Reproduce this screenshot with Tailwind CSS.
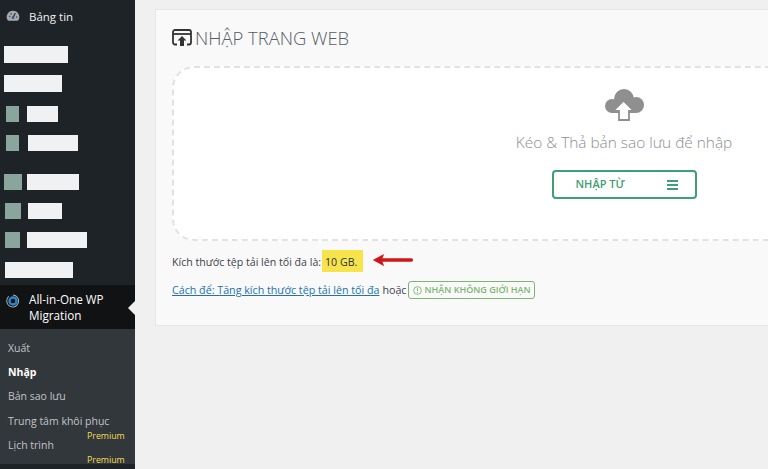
<!DOCTYPE html>
<html lang="vi">
<head>
    <meta charset="UTF-8">
    <title>All-in-One WP Migration</title>
    <script src="https://cdn.jsdelivr.net/npm/@tailwindcss/browser@4"></script>
</head>
<body class="w-[768px] h-[469px] overflow-hidden flex bg-[#f0f0f1] font-['Open_Sans','Noto_Sans',sans-serif] text-[#3c434a]">

    <!-- sidebar -->
    <aside class="w-[135px] h-[469px] shrink-0 bg-[#1d2327] flex flex-col overflow-hidden">
        <div class="h-[34px] pl-[6px] flex items-center gap-[9px] text-[11.5px] text-[#f0f0f1]">
            <svg class="w-[14px] h-[14px]" viewBox="0 0 20 20"><path fill="#a7aaad" d="M10 1a9 9 0 0 0-7.600 13.800c.3.500.8.700 1.300.7h12.600c.5 0 1-.2 1.300-.7A9 9 0 0 0 10 1z"/><path stroke="#1d2327" stroke-width="1.600" stroke-linecap="round" d="M10 11L13 5M5 9h.5M7 5.500h.5M15 10h.5"/><circle cx="10" cy="11" r="2" fill="#3858a0"/></svg>
            <span>Bảng tin</span>
        </div>
        <div class="mt-[12px] ml-[4px] w-[64px] h-[17px] bg-[#f0f1f3]"></div>
        <div class="mt-[12px] ml-[4px] w-[58px] h-[17px] bg-[#f0f1f3]"></div>

        <div class="mt-[14px] ml-[6px] flex h-[16px]"><div class="w-[13px] bg-[#8aa59c]"></div><div class="ml-[8px] w-[31px] bg-[#f0f1f3]"></div></div>
        <div class="mt-[13px] ml-[6px] flex h-[16px]"><div class="w-[13px] bg-[#8aa59c]"></div><div class="ml-[9px] w-[50px] bg-[#f0f1f3]"></div></div>
        <div class="mt-[23px] ml-[4px] flex h-[16px]"><div class="w-[18px] bg-[#8aa59c]"></div><div class="ml-[5px] w-[52px] bg-[#f0f1f3]"></div></div>
        <div class="mt-[13px] ml-[5px] flex h-[16px]"><div class="w-[16px] bg-[#8aa59c]"></div><div class="ml-[7px] w-[34px] bg-[#f0f1f3]"></div></div>
        <div class="mt-[13px] ml-[5px] flex h-[16px]"><div class="w-[15px] bg-[#8aa59c]"></div><div class="ml-[7px] w-[60px] bg-[#f0f1f3]"></div></div>
        <div class="mt-[14px] ml-[5px] w-[68px] h-[16px] bg-[#f0f1f3]"></div>

        <!-- active plugin item -->
        <div class="relative mt-[7px] h-[44px] bg-[#101214] flex items-center pl-[6px] gap-[9px] text-[11.7px] leading-[16px] text-white">
            <svg class="w-[14px] h-[14px] shrink-0 -mt-[13px]" viewBox="0 0 20 20" fill="none"><path stroke="#9fb3bd" stroke-width="1.500" d="M4 3.500A8.500 8.500 0 1 0 10 1.500"/><circle cx="10" cy="10" r="5" stroke="#2a86c8" stroke-width="3.500"/></svg>
            <span>All-in-One WP<br>Migration</span>
            <div class="absolute right-0 top-[16px] w-0 h-0 border-y-[7px] border-y-transparent border-r-[7px] border-r-[#f0f0f1]"></div>
        </div>

        <!-- submenu -->
        <div class="relative h-[135px] bg-[#32373c] pt-[7px] pl-[8px] flex flex-col text-[10.5px] leading-[24.200px] text-[#c3c4c7]">
            <span>Xuất</span>
            <span class="font-bold text-white">Nhập</span>
            <span>Bản sao lưu</span>
            <span class="whitespace-nowrap">Trung tâm khôi phục</span>
            <span>Lịch trình</span>
            <span class="absolute left-[87px] top-[100px] text-[8.800px] leading-[14px] text-[#f2dc50]">Premium</span>
            <span class="absolute left-[87px] top-[124px] text-[8.800px] leading-[14px] text-[#f2dc50]">Premium</span>
        </div>
    </aside>

    <!-- main -->
    <main class="pl-[20px] pt-[9px]">
        <section class="w-[640px] h-[317px] overflow-hidden bg-[#f9f9f9] border border-[#e6e6e6] pl-[16px] pt-[14px]">
            <h1 class="h-[28px] flex items-center gap-[3px] text-[18.400px] font-light text-[#555d66] whitespace-nowrap">
                <svg class="w-[20px] h-[18px]" viewBox="0 0 20 18" fill="none"><path stroke="#333" stroke-width="1.800" d="M5 15.500H3a2 2 0 0 1-2-2V3a2 2 0 0 1 2-2h14a2 2 0 0 1 2 2v10.500a2 2 0 0 1-2 2h-2"/><path stroke="#333" stroke-width="1.800" d="M1 5h18"/><path fill="#333" d="M10 7l4.500 4.500H12V17H8v-5.500H5.500z"/></svg>
                <span>NHẬP TRANG WEB</span>
            </h1>
            <div class="mt-[14px] w-[904px] h-[175px] bg-white border-2 border-dashed border-[#e2e2e2] rounded-[22px] flex flex-col items-center pt-[21px]">
                <svg class="w-[40px] h-[32px]" viewBox="0 0 40 32"><g fill="#8f8f8f"><circle cx="8" cy="17" r="7"/><circle cx="20" cy="10" r="10"/><circle cx="32" cy="16" r="8"/><rect x="8" y="14" width="24" height="10"/></g><path fill="#fff" stroke="#8f8f8f" stroke-width="1.800" d="M19.500 11.500L30 22h-5v9H15v-9H9z"/></svg>
                <p class="mt-[11px] text-[15.400px] leading-[22px] font-light text-[#8a8f94]">Kéo &amp; Thả bản sao lưu để nhập</p>
                <div class="mt-[16px] w-[145px] h-[29px] border-2 border-[#3f9e74] rounded-[4px] flex items-center pl-[22px] text-[11px] font-semibold text-[#3f9e74]">
                    <span>NHẬP TỪ</span>
                    <div class="ml-[42px] w-[11px] h-[10px] flex flex-col justify-between">
                        <div class="h-[2px] bg-[#3f9e74]"></div>
                        <div class="h-[2px] bg-[#3f9e74]"></div>
                        <div class="h-[2px] bg-[#3f9e74]"></div>
                    </div>
                </div>
            </div>
            <div class="mt-[9px] h-[22px] flex items-center text-[10.600px] leading-[22px] whitespace-nowrap">
                <span class="pt-[1px]">Kích thước tệp tải lên tối đa là:</span>
                <span class="h-[22px] w-[41px] ml-[1px] pl-[3px] pt-[1px] bg-[#f7e34b] flex items-center font-medium text-[#2c3338]">10 GB.</span>
                <svg class="ml-[7px] -mt-[2px] w-[45px] h-[14px]" viewBox="0 0 45 16"><path fill="#d0161b" d="M0 8L13 1 11 6H44a2 2 0 0 1 0 4H11L13 15z"/></svg>
            </div>
            <div class="mt-[8px] h-[20px] flex items-center text-[10.700px] whitespace-nowrap">
                <a class="text-[#2271b1] underline">Cách để: Tăng kích thước tệp tải lên tối đa</a>
                <span class="ml-[3px]">hoặc</span>
                <span class="ml-[2px] h-[18px] w-[127px] pl-[4px] border border-[#7cb772] rounded-[3px] flex items-center gap-[2px] text-[9px] font-semibold text-[#7cb772]">
                    <svg class="w-[9px] h-[9px]" viewBox="0 0 10 10" fill="none"><circle cx="5" cy="5" r="4.300" stroke="#7cb772"/><path stroke="#7cb772" stroke-width="1.100" d="M5 2.500v3.200M5 6.700v1"/></svg>
                    NHẬN KHÔNG GIỚI HẠN
                </span>
            </div>
        </section>
    </main>
</body>
</html>
